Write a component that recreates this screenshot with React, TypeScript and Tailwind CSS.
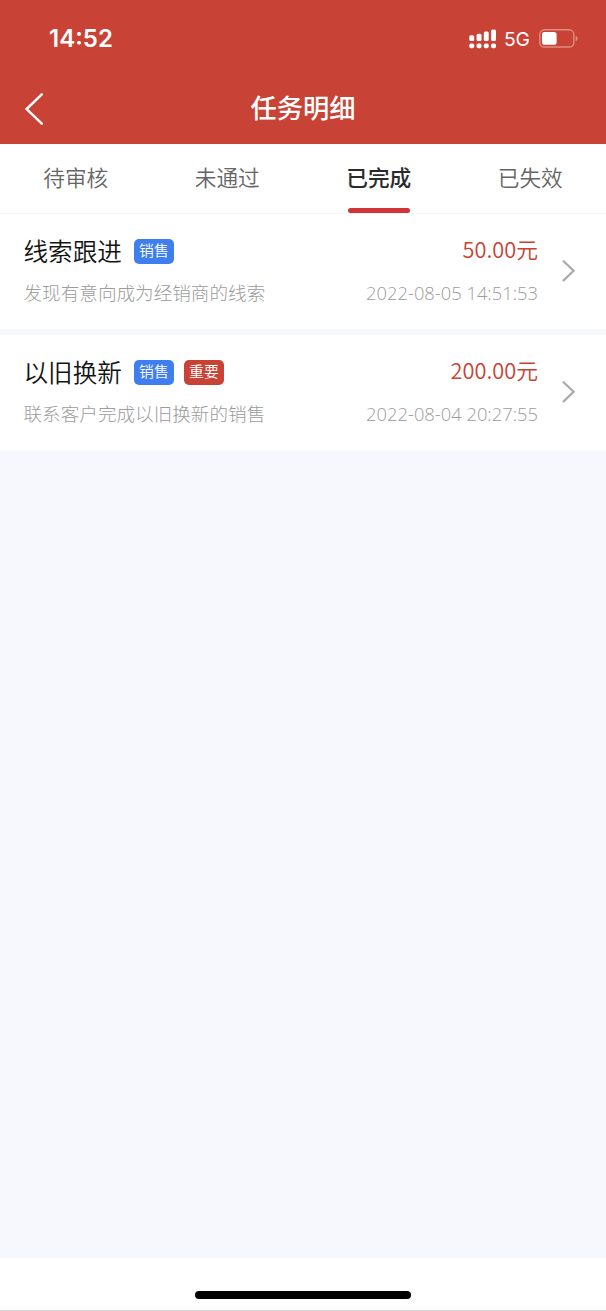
type Task = {
  title: string;
  tags: { text: string; urgent?: boolean }[];
  description: string;
  amount: string;
  time: string;
};

const tabs = ['待审核', '未通过', '已完成', '已失效'];
const activeTab = '已完成';

const tasks: Task[] = [
  {
    title: '线索跟进',
    tags: [{ text: '销售' }],
    description: '发现有意向成为经销商的线索',
    amount: '50.00元',
    time: '2022-08-05 14:51:53',
  },
  {
    title: '以旧换新',
    tags: [{ text: '销售' }, { text: '重要', urgent: true }],
    description: '联系客户完成以旧换新的销售',
    amount: '200.00元',
    time: '2022-08-04 20:27:55',
  },
];

function SignalIcon() {
  return (
    <svg className="h-[20px] w-[28px]" viewBox="0 0 28 20" fill="#fff">
      <rect x="0.3" y="6.3" width="4.9" height="5.8" rx="1.5" />
      <rect x="7.6" y="4.7" width="4.9" height="7.4" rx="1.5" />
      <rect x="14.8" y="2.5" width="4.9" height="9.6" rx="1.5" />
      <rect x="22.1" y="0.5" width="4.9" height="11.6" rx="1.5" />
      <rect x="0.3" y="14.4" width="4.9" height="4.9" rx="1.7" />
      <rect x="7.6" y="14.4" width="4.9" height="4.9" rx="1.7" />
      <rect x="14.8" y="14.4" width="4.9" height="4.9" rx="1.7" />
      <rect x="22.1" y="14.4" width="4.9" height="4.9" rx="1.7" />
    </svg>
  );
}

function BatteryIcon() {
  return (
    <svg className="h-[20px] w-[40px]" viewBox="0 0 40 20" fill="none">
      <rect x="0.8" y="0.8" width="34" height="17.2" rx="4.6" stroke="#e08d83" strokeWidth="1.4" />
      <rect x="3" y="3" width="14.6" height="12.8" rx="2.6" fill="#fff" />
      <path d="M36.6 6.7c1.3.5 2 1.6 2 2.8s-.7 2.3-2 2.8z" fill="#e08d83" />
    </svg>
  );
}

function StatusBar() {
  return (
    <div className="flex h-[77px] items-center justify-between pl-[49px] pr-[27px] text-white">
      <span className="font-[Inter,sans-serif] text-[24px] font-semibold leading-6">14:52</span>
      <div className="flex items-center">
        <SignalIcon />
        <span className="ml-[7px] mr-[10px] w-[25px] whitespace-nowrap pt-[1px] font-[Inter,sans-serif] text-[19.3px] font-normal leading-5 tracking-[-0.2px]">
          5G
        </span>
        <BatteryIcon />
      </div>
    </div>
  );
}

function NavBar() {
  return (
    <div className="grid h-[67px] grid-cols-[1fr_auto_1fr] items-center text-white">
      <svg className="ml-[24px] mt-[-4px] h-[34px] w-[20px]" viewBox="0 0 20 34" fill="none">
        <path d="M17.8 2.4 2.6 17.1l15.2 14.6" stroke="#fff" strokeWidth="2.5" strokeLinecap="round" />
      </svg>
      <h1 className="mt-[-7px] text-[26.3px] font-medium leading-9">任务明细</h1>
    </div>
  );
}

function TabBar() {
  return (
    <div className="grid h-[70px] grid-cols-4 border-b border-[#f4f4f6] bg-white">
      {tabs.map((tab) => (
        <button key={tab} className="flex flex-col items-center justify-between pt-[17px] text-[21.7px] leading-8">
          {tab === activeTab ? (
            <>
              <span className="font-medium text-[#2b2b2b]">{tab}</span>
              <span className="ml-[1px] h-[5px] w-[62px] rounded-full bg-[#d03438]" />
            </>
          ) : (
            <span className="font-[350] text-[#666]">{tab}</span>
          )}
        </button>
      ))}
    </div>
  );
}

function TaskRow({ task }: { task: Task }) {
  return (
    <div className="flex h-[115px] items-start bg-white pl-[23.5px] pr-[31px] pt-[18px]">
      <div className="flex min-w-0 flex-1 flex-col gap-[10px]">
        <div className="flex h-9 items-start justify-between">
          <div className="flex items-start">
            <span className="mr-[12px] text-[24.6px] font-[350] leading-9 text-[#141414]">{task.title}</span>
            {task.tags.map((tag) => (
              <span
                key={tag.text}
                className={`mr-[10px] mt-[7px] flex h-[25px] w-[40px] items-center justify-center rounded-[5px] pb-[3px] text-[14.8px] font-[350] leading-5 text-white ${
                  tag.urgent ? 'bg-[#c84335]' : 'bg-[#3e7eee]'
                }`}
              >
                {tag.text}
              </span>
            ))}
          </div>
          <span className="pt-[1px] text-[21.8px] font-[350] leading-8 text-[#c84335]">{task.amount}</span>
        </div>
        <div className="flex h-7 items-center justify-between text-[18.6px] font-light leading-7 text-[#9c9c9c]">
          <span>{task.description}</span>
          <span className="mt-[1px] font-['Open_Sans',sans-serif] text-[18.35px]">{task.time}</span>
        </div>
      </div>
      <svg className="ml-[23px] mt-[27px] h-[24px] w-[14px]" viewBox="0 0 14 24" fill="none">
        <path d="M2.6 2.2 12.6 11.8 2.6 21.4" stroke="#aaa" strokeWidth="2.2" strokeLinecap="round" />
      </svg>
    </div>
  );
}

export default function App() {
  return (
    <div className="flex h-[1311px] w-[606px] flex-col bg-[#f6f8fd] font-['Noto_Sans_CJK_SC',sans-serif]">
      <header className="h-[144px] bg-[#c84335]">
        <StatusBar />
        <NavBar />
      </header>
      <TabBar />
      <main className="flex flex-1 flex-col gap-[6px]">
        {tasks.map((task) => (
          <TaskRow key={task.title} task={task} />
        ))}
      </main>
      <footer className="flex h-[53px] items-end justify-center border-b border-[#d5d5d5] bg-white pb-[11px]">
        <div className="h-[8px] w-[216px] rounded-full bg-black" />
      </footer>
    </div>
  );
}
